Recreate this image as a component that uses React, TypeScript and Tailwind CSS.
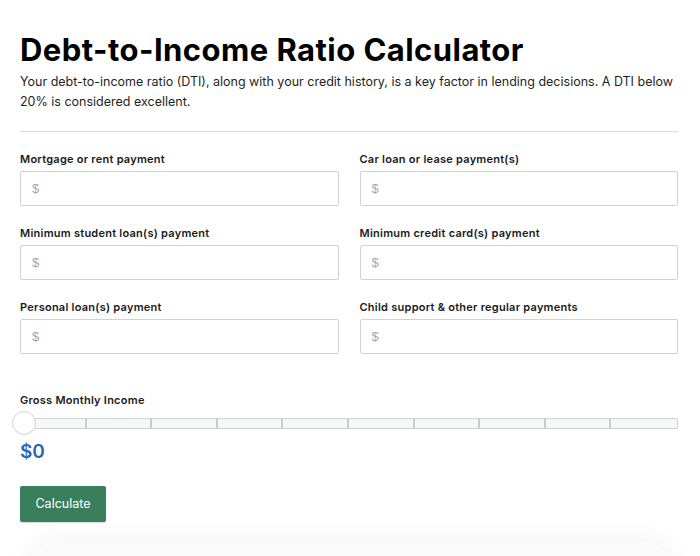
import React from 'react';

const fields = [
  ['Mortgage or rent payment', 'Car loan or lease payment(s)'],
  ['Minimum student loan(s) payment', 'Minimum credit card(s) payment'],
  ['Personal loan(s) payment', 'Child support & other regular payments'],
];

const MoneyInput = ({ label }: { label: string }) => (
  <div className="flex flex-col">
    <label className="text-[11px] font-semibold text-[#1a1a1a] leading-[14px] tracking-[0.25px] mb-[5px]">{label}</label>
    <div className="h-[35px] border border-[#cfd3d6] rounded-[2px] flex items-center px-[11px]">
      <input
        className="w-full outline-none text-[13px] text-[#333] placeholder:text-[#a6a6a6] font-['Liberation_Sans',sans-serif]"
        placeholder="$"
      />
    </div>
  </div>
);

const App = () => {
  return (
    <div className="bg-white h-[556px] font-['Inter','Lato',sans-serif] text-[#1a1a1a] overflow-hidden">
      <div className="px-5 pt-[31px]">
        <h1 className="text-[31px] font-bold leading-[38px] tracking-[0.45px] text-black whitespace-nowrap">
          Debt-to-Income Ratio Calculator
        </h1>
        <p className="mt-[3px] text-[12.5px] leading-[20px] text-[#1f1f1f] whitespace-nowrap">
          Your debt-to-income ratio (DTI), along with your credit history, is a key factor in lending decisions. A DTI below
          <br />
          20% is considered excellent.
        </p>
        <div className="h-px bg-[#dcdcdc] mt-[19px] mr-[2px]" />

        <div className="mt-[20px] flex flex-col gap-[20px] mr-[2px]">
          {fields.map((row, i) => (
            <div key={i} className="grid grid-cols-2 gap-[21px]">
              <MoneyInput label={row[0]} />
              <MoneyInput label={row[1]} />
            </div>
          ))}
        </div>

        <div className="mt-[39px]">
          <div className="text-[11px] font-semibold leading-[14px] tracking-[0.25px]">Gross Monthly Income</div>
          <div className="relative mt-[11px] mr-[2px]">
            <div className="h-[11px] border border-[#cfd3d6] bg-[#f5f7f8] grid grid-cols-10 rounded-[1px]">
              {Array.from({ length: 10 }).map((_, i) => (
                <div key={i} className={i < 9 ? 'border-r-2 border-[#c9cdd0]' : ''} />
              ))}
            </div>
            <div className="absolute -left-[8px] top-[-7px] w-[24px] h-[24px] rounded-full bg-white border border-[#cfd3d6]" />
          </div>
          <div className="mt-[11px] text-[19px] font-semibold text-[#2a66b8] leading-[24px]">$0</div>
        </div>

        <button className="mt-[22px] h-[36px] w-[86px] bg-[#3a7f5b] text-white text-[12.5px] rounded-[2px] shadow-[0_1px_1px_rgba(0,0,0,0.15)]">
          Calculate
        </button>
      </div>
      <div className="mx-[20px] mt-[20px] h-[40px] rounded-t-[40px] shadow-[0_-8px_18px_rgba(0,0,0,0.04)] bg-[#fbfbfb]" />
    </div>
  );
};

export default App;
